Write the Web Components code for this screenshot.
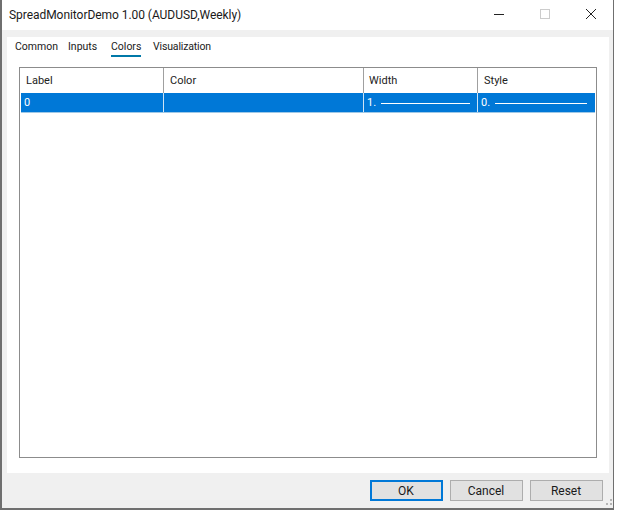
<!DOCTYPE html>
<html><head><meta charset="utf-8"><style>html,body{margin:0;padding:0;background:#fff;width:617px;height:511px;overflow:hidden}</style></head><body>
<app-window title="SpreadMonitorDemo 1.00 (AUDUSD,Weekly)"></app-window>
<script>
const F='"Roboto",sans-serif';
class DlgButton extends HTMLElement{constructor(){super();this.attachShadow({mode:'open'}).innerHTML=`<style>
:host{display:flex;align-items:center;justify-content:center;box-sizing:border-box;width:73px;height:21px;padding-right:1px;background:#e1e1e1;border:1px solid #adadad;color:#1a1a1a;font:12px ${F}}
:host([primary]){border:2px solid #0078d7}
</style><slot></slot>`}}
customElements.define('dlg-button',DlgButton);

class TitleBar extends HTMLElement{constructor(){super();this.attachShadow({mode:'open'}).innerHTML=`<style>
:host{display:flex;align-items:center;height:30px;background:#fff;flex:none}
.t{flex:1;padding-left:7px;font:12px ${F};letter-spacing:-.05px;color:#1a1a1a;white-space:nowrap}
.c{display:flex;gap:34px;padding:0 16px 2px 0;align-items:center}
svg{display:block;width:12px;height:12px}
</style><div class="t"><slot></slot></div><div class="c">
<svg viewBox="0 0 12 12"><path d="M1 6.5H11" stroke="#222" stroke-width="1"/></svg>
<svg viewBox="0 0 12 12"><rect x="1.5" y="1.5" width="9" height="9" fill="none" stroke="#ccc"/></svg>
<svg viewBox="0 0 12 12"><path d="M1 1L11 11M11 1L1 11" stroke="#222" stroke-width="1"/></svg></div>`}}
customElements.define('title-bar',TitleBar);

class TabStrip extends HTMLElement{constructor(){super();this.attachShadow({mode:'open'}).innerHTML=`<style>
:host{display:grid;grid-template-columns:41px 31px 30px 58px;gap:12px;padding:2px 0 0 8px;height:18px;font:10.5px ${F};color:#1a1a1a}
span{display:block;height:17px;line-height:15px;white-space:nowrap}
span:first-child{font-size:10px;letter-spacing:-.2px}
span:last-child{letter-spacing:-.15px}
.on{border-bottom:2px solid #0078a8;height:16px}
</style><span>Common</span><span>Inputs</span><span class="on">Colors</span><span>Visualization</span>`}}
customElements.define('tab-strip',TabStrip);

const cols='143px 200px 114px 117px';
class DataGrid extends HTMLElement{constructor(){super();this.attachShadow({mode:'open'}).innerHTML=`<style>
:host{display:block;box-sizing:border-box;flex:1;min-width:0;border:1px solid #8c8c8c;background:#fff;padding:0 1px;font:11px ${F};color:#222}
.r{display:grid;grid-template-columns:${cols}}
.h{height:25px}
.h div{border-right:1px solid #a0a0a0;padding:5px 0 0 5px;box-sizing:border-box;line-height:15px}
.h div:nth-child(2),.h div:nth-child(4){padding-left:6px}
.h div:last-child{border:0}
.s{background:#0078d7;color:#fff;height:19px;box-shadow:0 1px 0 #9fc8e6}
.s div{display:flex;align-items:center;gap:5px;padding:0 7px 0 3px;border-right:1px solid #cfe4f5;box-sizing:border-box}
.s div:last-child{border:0;padding-right:8px}
.s i{flex:1;height:1px;background:#fff;margin-top:1px}
</style><div class="r h"><div>Label</div><div>Color</div><div>Width</div><div>Style</div></div>
<div class="r s"><div>0</div><div></div><div>1.<i></i></div><div>0.<i></i></div></div>`}}
customElements.define('data-grid',DataGrid);

class AppWindow extends HTMLElement{constructor(){super();this.attachShadow({mode:'open'}).innerHTML=`<style>
:host{display:flex;flex-direction:column;box-sizing:border-box;width:614px;height:510px;border:solid #6f6f6f;border-width:0 1px 2px 2px;background:#f0f0f0;position:relative}
.p{flex:none;height:436px;margin:7px 4px 0 5px;background:#fff;display:flex;flex-direction:column}
.g{flex:1;display:flex;margin:10px 12px 15px 12px;min-width:0}
.b{display:flex;justify-content:flex-end;gap:7px;padding:7px 10px 0 0}
.grip{position:absolute;right:0;bottom:0;width:11px;height:11px}
</style><title-bar>${this.getAttribute('title')}</title-bar>
<div class="p"><tab-strip></tab-strip><div class="g"><data-grid></data-grid></div></div>
<div class="b"><dlg-button primary>OK</dlg-button><dlg-button>Cancel</dlg-button><dlg-button>Reset</dlg-button></div>
<svg class="grip" viewBox="0 0 11 11" fill="#b5b5b5"><rect x="8" y="2" width="2" height="2"/><rect x="4" y="6" width="2" height="2"/><rect x="8" y="6" width="2" height="2"/></svg>`}}
customElements.define('app-window',AppWindow);
</script></body></html>
